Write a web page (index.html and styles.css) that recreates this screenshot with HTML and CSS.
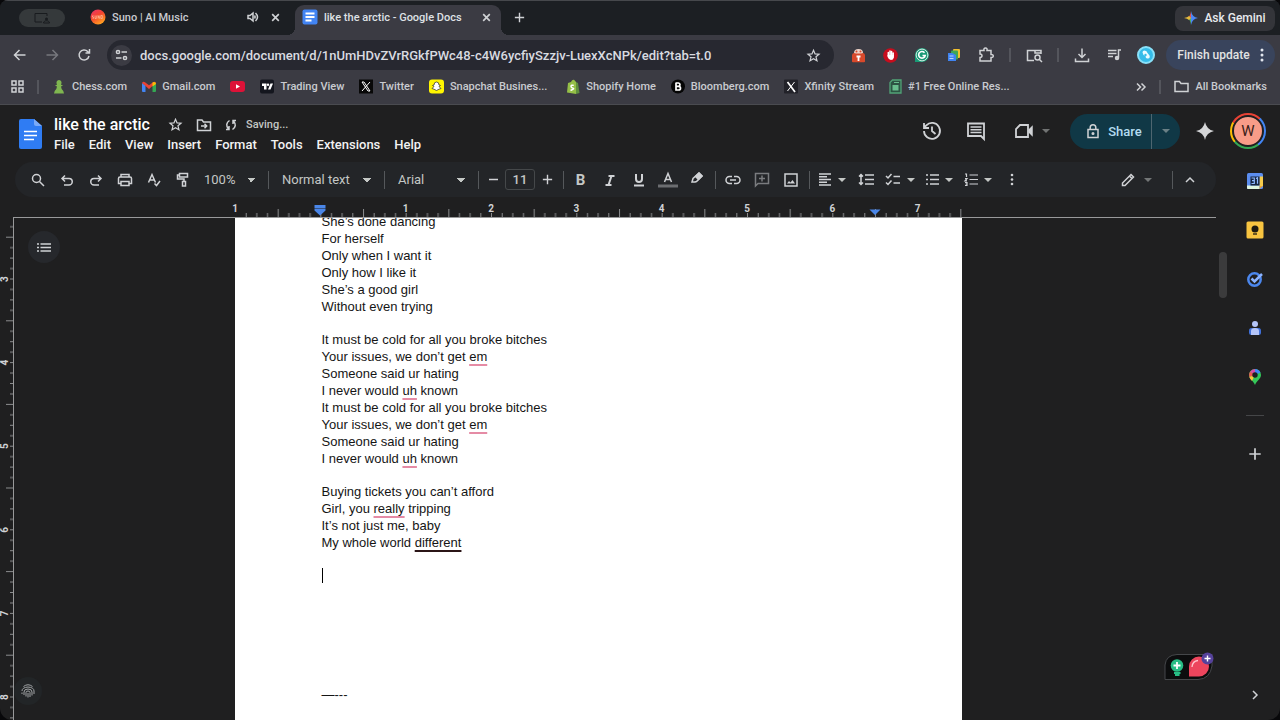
FILE: index.html
```html
<!DOCTYPE html>
<html lang="en">
<head>
    <meta charset="UTF-8">
    <meta name="viewport" content="width=device-width, initial-scale=1.0">
    <title>like the arctic - Google Docs</title>
    <link rel="stylesheet" href="styles.css">
</head>
<body>
    <!-- Shared icons -->
    <svg class="sprite" aria-hidden="true">
        <symbol id="i-close" viewBox="0 0 10 10"><path d="M2 2l6 6M8 2L2 8"/></symbol>
        <symbol id="i-plus" viewBox="0 0 14 14"><path d="M7 2v10M2 7h10"/></symbol>
        <symbol id="i-star" viewBox="0 0 24 24"><path d="M12 3.6l2.5 5.8 6.3.6-4.8 4.1 1.5 6.2-5.5-3.3-5.5 3.3L8 14.100l-4.800-4.100 6.300-.6z"/></symbol>
        <symbol id="i-docs" viewBox="0 0 23 30"><path fill="#2f7cf3" d="M2 0h13l8 7v21a2 2 0 0 1-2 2H2a2 2 0 0 1-2-2V2a2 2 0 0 1 2-2z"/><path fill="#7aaaf8" d="M15 0l8 7h-6a2 2 0 0 1-2-2z"/><path stroke="#fff" stroke-width="1.600" d="M5 12.500h13M5 16.500h13M5 20.500h10"/></symbol>
    </svg>

    <!-- Browser chrome -->
    <div class="tab-strip">
        <button class="profile-pill" aria-label="Shared screen"><svg width="18" height="12" viewBox="0 0 18 12"><path d="M9 10H2V1.500h12V4" /><circle cx="13.500" cy="7" r="1.500" fill="#181b1e"/><path d="M10.500 11c0-3 6-3 6 0z" fill="#181b1e"/></svg></button>
        <div class="tab">
            <svg width="16" height="16" viewBox="0 0 16 16"><defs><linearGradient id="suno" x2="0.600" y2="1"><stop offset="0" stop-color="#e8336f"/><stop offset="0.500" stop-color="#f4452f"/><stop offset="1" stop-color="#ffa021"/></linearGradient></defs><circle cx="8" cy="8" r="7.500" fill="url(#suno)"/><path d="M3.500 6.800h-1v1.300h1v1.300h-1M5 6.500v3h1.300v-3M8 9.500v-3l1.300 3v-3M10.800 6.500h1.500v3h-1.500z" stroke="#ffc0a0" stroke-width=".7" fill="none"/></svg>
            <span class="tab-title">Suno | AI Music</span>
            <button aria-label="Mute tab"><svg class="line" width="12" height="12" viewBox="0 0 12 12"><path d="M1 4.500h2l3-2.500v8L3 7.500H1z"/><path d="M7.500 4.500q1.200 1.500 0 3M8.500 2q4 4 0 8"/></svg></button>
            <button aria-label="Close tab"><svg class="line" width="11" height="11"><use href="#i-close"/></svg></button>
        </div>
        <div class="tab active">
            <svg width="16" height="16" viewBox="0 0 16 16"><rect x=".5" y=".5" width="15" height="15" rx="2" fill="#4284f3"/><path d="M3.500 4.500h9M3.500 8h9M3.500 11.500h6" stroke="#fff" stroke-width="1.800"/></svg>
            <span class="tab-title">like the arctic - Google Docs</span>
            <button aria-label="Close tab"><svg class="line" width="11" height="11"><use href="#i-close"/></svg></button>
        </div>
        <button class="new-tab" aria-label="New tab"><svg class="line" width="13" height="13"><use href="#i-plus"/></svg></button>
        <button class="gemini"><svg width="14" height="14" viewBox="0 0 14 14"><path fill="#4b87f5" d="M7 0q1 6 7 7-6 1-7 7z"/><path fill="#e6514c" d="M7 0v7H3.500Q6.500 5 7 0z"/><path fill="#4fae62" d="M7 14V7H3.500Q6.500 9 7 14z"/><path fill="#e3ba3d" d="M0 7q3.500-.6 5-2l2 2-2 2Q3.500 7.600 0 7z"/></svg>Ask Gemini</button>
    </div>

    <div class="browser-bar">
        <button class="nav-btn" aria-label="Back"><svg class="line" width="14" height="14" viewBox="0 0 14 14"><path d="M12.500 7H2M6.500 2L1.500 7l5 5"/></svg></button>
        <button class="nav-btn dim" aria-label="Forward"><svg class="line" width="14" height="14" viewBox="0 0 14 14"><path d="M1.500 7H12M7.500 2l5 5-5 5"/></svg></button>
        <button class="nav-btn" aria-label="Reload"><svg class="line" width="14" height="14" viewBox="0 0 14 14"><path d="M12 8a5 5 0 1 1-1.300-4.500L12.500 5M12.500 1v4h-4"/></svg></button>
        <div class="address">
            <button class="site-info" aria-label="Site information"><svg class="line" width="13" height="12" viewBox="0 0 13 12"><circle cx="3" cy="3" r="1.600"/><path d="M6.500 3H12M1 9h5.500"/><circle cx="10" cy="9" r="1.600"/></svg></button>
            <input type="text" aria-label="Address" value="docs.google.com/document/d/1nUmHDvZVrRGkfPWc48-c4W6ycfiySzzjv-LuexXcNPk/edit?tab=t.0">
            <button aria-label="Bookmark this tab"><svg class="line wide" width="15" height="15"><use href="#i-star"/></svg></button>
        </div>
        <div class="extensions">
            <button class="nav-btn" aria-label="Password extension"><svg width="15" height="15" viewBox="0 0 15 15"><path fill="#d8492b" d="M1 7q.5-2 2-2h9q1.500 0 2 2v6.500q0 .8-1 .8H2q-1 0-1-.8z"/><path fill="#eed3c8" d="M3 5q0-4 4.500-4T12 5l-2 .5H5z"/><circle cx="5.500" cy="3.500" r="1" fill="#d8492b"/><circle cx="9.500" cy="3.500" r="1" fill="#d8492b"/><path stroke="#fff" stroke-width="1.800" d="M7.500 8v5M5.500 8.500h4"/></svg></button>
            <button class="nav-btn" aria-label="AdBlock"><svg width="15" height="15" viewBox="0 0 15 15"><circle cx="7.500" cy="7.500" r="7.300" fill="#c70d1d"/><path fill="none" stroke="#fff" stroke-width="1.500" stroke-linecap="round" d="M5.300 8V4.500M7 7V3M8.600 7V3.500M10.200 8V5"/><path fill="#fff" d="M4.600 7h6.300v2.500q-.5 2.500-3 2.500-2 0-3.300-3z"/></svg></button>
            <button class="nav-btn" aria-label="Grammarly"><svg width="16" height="16" viewBox="0 0 16 16"><path fill="#189a76" d="M1 15V8a7 7 0 1 1 7 7z"/><circle cx="8" cy="8" r="5.900" fill="none" stroke="#d6efe7"/><path fill="none" stroke="#fff" stroke-width="1.600" d="M10.500 5.700A3.300 3.300 0 1 0 11.200 8.500H8.500"/></svg></button>
            <button class="nav-btn" aria-label="Copy extension"><svg width="14" height="14" viewBox="0 0 14 14"><rect x="6" y="1" width="7" height="9" rx="1" fill="#f2c02e"/><rect x="4" y="2.500" width="7" height="9" rx="1" fill="#3fa657"/><path d="M1 5h4.500L9 7v6H1z" fill="#3f83f0"/><path d="M2.500 8h4M2.500 10.500h4" stroke="#bcd4fb"/></svg></button>
            <button class="nav-btn" aria-label="Extensions"><svg class="line" width="16" height="16" viewBox="0 0 16 16"><path d="M2 3.500h4Q5.500 1 7.500 1T9 3.500h4v4q2.300-.2 2.300 1.500T13 10.500V14H2v-3.500q2 0 2-1.700T2 7z"/></svg></button>
            <i class="bar-sep"></i>
            <button class="nav-btn" aria-label="Search tabs"><svg class="line" width="17" height="15" viewBox="0 0 17 15"><path d="M8 12.500H1.500v-10h13.500V6M9 2.500v2.500h6"/><circle cx="11.500" cy="9.500" r="2.500"/><path d="M13.500 11.500l2.500 2.500"/></svg></button>
            <i class="bar-sep"></i>
            <button class="nav-btn" aria-label="Downloads"><svg class="line" width="16" height="16" viewBox="0 0 16 16"><path d="M8 1.500V10M4.500 7L8 10.500 11.500 7M1.500 11.500v3h13v-3"/></svg></button>
            <button class="nav-btn" aria-label="Media"><svg class="line" width="15" height="14" viewBox="0 0 15 14"><path d="M1 2.500h8.500M1 5.500h8.500M1 8.500h5M11.500 9.500V2H14"/><circle cx="10" cy="10" r="1.500" fill="#c9cbd0"/></svg></button>
            <button class="nav-btn" aria-label="Profile"><svg width="18" height="18" viewBox="0 0 18 18"><circle cx="9" cy="9" r="8" fill="#35bce9" stroke="#8ae0f8" stroke-width="2"/><path d="M5.500 6.500q0-2 2-2 2.500 0 3 2.500l2 2.500q1 2.500-1.500 3t-2.500-2.500l-2-1z" fill="#e9fbff"/><circle cx="8.500" cy="9" r="1.200" fill="#35bce9"/></svg></button>
        </div>
        <button class="update-btn">Finish update<svg width="4" height="14" viewBox="0 0 4 14" fill="#e3e7ef"><circle cx="2" cy="2" r="1.500"/><circle cx="2" cy="7" r="1.500"/><circle cx="2" cy="12" r="1.500"/></svg></button>
    </div>

    <nav class="bookmarks">
        <button aria-label="Apps"><svg class="line" width="13" height="13" viewBox="0 0 13 13"><path d="M1 1h4v4H1zM8 1h4v4H8zM1 8h4v4H1zM8 8h4v4H8z"/></svg></button>
        <i class="bar-sep"></i>
        <a href="#"><svg width="14" height="15" viewBox="0 0 14 15"><path fill="#7fb650" d="M7 1a2.700 2.700 0 0 1 1.800 4.600L11 6.500l-2 1q.3 3 2.300 4.500l.7 2.500H2l.7-2.500Q4.700 10.500 5 7.500l-2-1 2.200-.9A2.700 2.700 0 0 1 7 1z"/></svg>Chess.com</a>
        <a href="#"><svg width="14" height="15" viewBox="0 0 14 15"><path fill="#4285f4" d="M0 4l3.500 2.500V13H1q-1 0-1-1z"/><path fill="#34a853" d="M14 4l-3.500 2.500V13H13q1 0 1-1z"/><path fill="#ea4335" d="M0 4q1-2 3-.8l4 3 4-3q2-1.200 3 .8L7 10z"/><path fill="#fbbc04" d="M10.500 3.500L12 3q2 0 2 2l-3.500 2.500z"/></svg>Gmail.com</a>
        <a href="#" aria-label="YouTube"><svg width="15" height="15" viewBox="0 0 15 15"><rect y="2" width="15" height="11" rx="3" fill="#dd1238"/><path fill="#fff" d="M6 5.200v4.600l4-2.300z"/></svg></a>
        <a href="#"><svg width="14" height="15" viewBox="0 0 14 15"><rect y=".5" width="14" height="14" rx="2" fill="#14161e"/><path fill="#fff" d="M2 4.500h4.500v6h-2.500V7H2zM10.500 4.500H13l-2.500 6H8z"/><circle cx="8" cy="5.700" r="1.200" fill="#fff"/></svg>Trading View</a>
        <a href="#"><svg width="14" height="15" viewBox="0 0 14 15"><rect y=".5" width="14" height="14" fill="#080808"/><path fill="none" stroke="#fff" d="M3 3h2l6 9H9zM11 3L3 12"/></svg>Twitter</a>
        <a href="#" class="long"><svg width="15" height="15" viewBox="0 0 15 15"><rect y=".5" width="15" height="14" rx="3" fill="#fff500"/><path fill="#fff" stroke="#222" stroke-width=".7" d="M7.500 3Q10 3 10 6l1.500.5-1.500 1 2 2-2 .7-2.500 1.300L5 10.200 3 9.500l2-2-1.500-1L5 6q0-3 2.500-3z"/></svg>Snapchat Busines...</a>
        <a href="#"><svg width="14" height="15" viewBox="0 0 14 15"><path fill="#95bf47" d="M2 4l3-1q1-2.500 3-2.200L10 3v12l-9-1.500z"/><path fill="#5e8e3e" d="M10 3l2 1 1.500 10-3.500 1z"/><path fill="none" stroke="#fff" stroke-width="1.500" d="M7.800 6.400Q5 5.600 5 7.300T7 9.300 4.500 11.500"/></svg>Shopify Home</a>
        <a href="#"><svg width="14" height="15" viewBox="0 0 14 15"><circle cx="7" cy="7.500" r="7" fill="#050505"/><path fill="none" stroke="#fff" stroke-width="1.700" d="M5 4v7h2.500q2 0 2-1.800T7.500 7.300H5M7.300 7.300Q9 7.200 9 5.700T7.300 4H4.500"/></svg>Bloomberg.com</a>
        <a href="#"><svg width="14" height="15" viewBox="0 0 14 15"><rect y=".5" width="14" height="14" rx="1" fill="#222229"/><path stroke="#fff" stroke-width="1.700" d="M3.500 3L11 13"/><path stroke="#fff" d="M10.500 3L3.500 12"/></svg>Xfinity Stream</a>
        <a href="#"><svg width="13" height="15" viewBox="0 0 13 15"><path fill="#2d5343" stroke="#51a477" stroke-width="1.300" d="M3.500 1H12v13H1V3.500z"/><path stroke="#69bd8d" d="M5 3.500h5"/><rect x="3.500" y="6" width="6" height="5.500" fill="#69bd8d"/></svg>#1 Free Online Res...</a>
        <button class="overflow" aria-label="More bookmarks"><svg class="line" width="10" height="10" viewBox="0 0 10 10"><path d="M1 1.500L4.500 5 1 8.500M5.500 1.500L9 5 5.500 8.500"/></svg></button>
        <i class="bar-sep"></i>
        <a href="#"><svg class="line" width="15" height="13" viewBox="0 0 15 13"><path d="M1 11.500v-10h4.500L7 3.500h7v8z"/></svg>All Bookmarks</a>
    </nav>

    <!-- Docs header -->
    <header class="docs-header">
        <a href="#" class="logo" aria-label="Docs home"><svg width="23" height="30"><use href="#i-docs"/></svg></a>
        <div class="heading">
            <div class="title-row">
                <input class="doc-title" type="text" aria-label="Document title" value="like the arctic">
                <button aria-label="Star"><svg class="line wide" width="15" height="15"><use href="#i-star"/></svg></button>
                <button aria-label="Move"><svg class="line" width="16" height="14" viewBox="0 0 16 14"><path d="M1.500 12.500V2H6l1.500 2h7v8.500zM5 8h5M8.500 5.800L10.700 8l-2.200 2.200"/></svg></button>
                <span class="status"><svg class="line" width="12" height="12" viewBox="0 0 12 12"><path d="M4.500 1.500Q-.5 5 3.500 10M4 7v3.500H1M7.500 10.500q5-3.500 1-8.500M8 5V1.500h3"/></svg>Saving...</span>
            </div>
            <nav class="menu">
                <button>File</button><button>Edit</button><button>View</button><button>Insert</button><button>Format</button><button>Tools</button><button>Extensions</button><button>Help</button>
            </nav>
        </div>
        <div class="header-actions">
            <button class="round" aria-label="Version history"><svg class="line" width="20" height="20" viewBox="0 0 20 20"><path d="M2 10a8 8 0 1 0 2.300-5.700L2 6.600M2 2v5h5M10 5.500V10l3.500 3" stroke-width="1.800"/></svg></button>
            <button class="round" aria-label="Comments"><svg class="line" width="20" height="20" viewBox="0 0 20 20"><path d="M2 2.500h16v15.500l-3-3H2z" stroke-width="1.800"/><path d="M4.500 6h11M4.500 8.800h11M4.500 11.600h11"/></svg></button>
            <button class="meet" aria-label="Join a call"><svg class="line" width="20" height="18" viewBox="0 0 20 18"><path d="M6 3h8v12H2V7z" stroke-width="1.800"/><path fill="#d0d2d5" d="M15 8l3-3v8l-3-3z"/></svg><i class="caret"></i></button>
            <div class="share">
                <button><svg class="line" width="14" height="16" viewBox="0 0 14 16"><path d="M2 6.500h10v8H2zM4.200 6.500v-2a2.800 2.800 0 0 1 5.600 0v2"/><circle cx="7" cy="10.500" r=".8"/></svg>Share</button>
                <button class="share-more" aria-label="Share options"><i class="caret"></i></button>
            </div>
            <button class="spark" aria-label="Ask Gemini"><svg width="20" height="20" viewBox="0 0 20 20"><path fill="#d5d6d8" d="M10 1q1.500 7.500 9 9-7.500 1.500-9 9-1.500-7.500-9-9 7.500-1.500 9-9z"/></svg></button>
            <button class="avatar" aria-label="Account"><span>W</span></button>
        </div>
    </header>

    <div class="docs-body">
        <div class="editor">
            <div class="toolbar">
                <button aria-label="Search menus"><svg class="line" width="14" height="14" viewBox="0 0 14 14"><circle cx="5.500" cy="5.500" r="4"/><path d="M8.500 8.500L13 13"/></svg></button>
                <button aria-label="Undo"><svg class="line" width="14" height="14" viewBox="0 0 14 14"><path d="M5 2.500L2 5.500l3 3M2.500 5.500H9a3 3 0 0 1 0 6.500H4"/></svg></button>
                <button aria-label="Redo"><svg class="line" width="14" height="14" viewBox="0 0 14 14"><path d="M9 2.500l3 3-3 3M11.500 5.500H5A3 3 0 0 0 5 12h5"/></svg></button>
                <button aria-label="Print"><svg class="line" width="16" height="14" viewBox="0 0 16 14"><path d="M4 4V1.500h8V4M4 10.500H1.500V5.500q0-1.500 1.500-1.500h10q1.500 0 1.500 1.500v5H12M4 8.500h8v4H4z"/></svg></button>
                <button aria-label="Spelling"><svg class="line" width="14" height="14" viewBox="0 0 14 14"><path d="M1.500 9.500l3.500-8 3.500 8M2.700 7h4.600M7.500 10.500l2 2L13 8"/></svg></button>
                <button aria-label="Paint format"><svg class="line" width="14" height="15" viewBox="0 0 14 15"><path d="M3.500 1.500h8v3.500h-8zM3.500 3H1.500v4H8v2.500M6.500 9.500h3v4.500h-3z"/></svg></button>
                <select class="zoom" aria-label="Zoom"><option>100%</option></select>
                <i class="sep"></i>
                <select class="para" aria-label="Styles"><option>Normal text</option></select>
                <i class="sep"></i>
                <select class="font" aria-label="Font"><option>Arial</option></select>
                <i class="sep"></i>
                <button class="step" aria-label="Decrease font size"><svg class="line" width="13" height="13" viewBox="0 0 13 13"><path d="M2 6.500h9"/></svg></button>
                <input class="size" type="text" aria-label="Font size" value="11">
                <button class="step" aria-label="Increase font size"><svg class="line" width="13" height="13"><use href="#i-plus"/></svg></button>
                <i class="sep"></i>
                <button class="bold">B</button>
                <button aria-label="Italic"><svg class="line thick" width="12" height="12" viewBox="0 0 12 12"><path d="M4.500 2h6M1.500 11h6M7.500 2L4.500 11"/></svg></button>
                <button aria-label="Underline"><svg class="line thick" width="12" height="14" viewBox="0 0 12 14"><path d="M3 1v5a3 3 0 0 0 6 0V1M1 12.500h10"/></svg></button>
                <button aria-label="Text color"><svg class="line" width="20" height="16" viewBox="0 0 20 16"><path d="M6.500 10L10 1.500 13.500 10M7.500 7.500h5"/><path stroke="#6b6d70" stroke-width="3" d="M0 14h20"/></svg></button>
                <button aria-label="Highlight color"><svg class="line" width="14" height="16" viewBox="0 0 14 16"><path d="M2 10l1-3.500L9 1l3 3-5.500 5.500L5 10z"/><path fill="#d0d2d5" d="M5.500 4.500L8.500 7.500 12 4 9 1z"/></svg></button>
                <i class="sep"></i>
                <button aria-label="Insert link"><svg class="line" width="16" height="14" viewBox="0 0 16 14"><path d="M7 3.500H4.500a3.500 3.500 0 0 0 0 7H7M9 3.500h2.500a3.500 3.500 0 0 1 0 7H9M5 7h6"/></svg></button>
                <button class="faded" aria-label="Add comment"><svg class="line" width="16" height="15" viewBox="0 0 16 15"><path d="M1.500 14V1.500h13v10H4zM8 3.500v6M5 6.500h6"/></svg></button>
                <button aria-label="Insert image"><svg class="line" width="14" height="14" viewBox="0 0 14 14"><path d="M1 1h12v12H1z"/><path fill="#d0d2d5" stroke="none" d="M3 10.500l2-2.500 1.500 1.500L8.500 7l2.500 3.500z"/></svg></button>
                <i class="sep"></i>
                <button class="drop" aria-label="Align"><svg class="line" width="14" height="13" viewBox="0 0 14 13"><path d="M1 1h12M1 3.800h8M1 6.500h12M1 9.300h8M1 12h12"/></svg><i class="caret"></i></button>
                <button aria-label="Line spacing"><svg class="line" width="16" height="13" viewBox="0 0 16 13"><path d="M7 2h9M7 6.500h9M7 11h9M3 1v11M1 3.500l2-2 2 2M1 9.500l2 2 2-2"/></svg></button>
                <button class="drop" aria-label="Checklist"><svg class="line" width="16" height="13" viewBox="0 0 16 13"><path d="M8.500 3.500H15M8.500 10H15M1 3l2 2 3.500-4M1 9.500l2 2 3.500-4"/></svg><i class="caret"></i></button>
                <button class="drop" aria-label="Bulleted list"><svg class="line" width="14" height="13" viewBox="0 0 14 13"><path d="M5 2h9M5 6.500h9M5 11h9M1 2h2M1 6.500h2M1 11h2"/></svg><i class="caret"></i></button>
                <button class="drop" aria-label="Numbered list"><svg class="line" width="14" height="13" viewBox="0 0 14 13"><path d="M5.500 2H14M5.500 6.500H14M5.500 11H14M1 1h1.500v3M1 5.500h2l-2 2.300h2M1 9.500h2v3H1M1.500 11H3" stroke-width="1.200"/></svg><i class="caret"></i></button>
                <button class="more" aria-label="More"><svg width="4" height="13" viewBox="0 0 4 13" fill="#d0d2d5"><circle cx="2" cy="2" r="1.300"/><circle cx="2" cy="6.500" r="1.300"/><circle cx="2" cy="11" r="1.300"/></svg></button>
                <button class="drop mode" aria-label="Editing mode"><svg class="line" width="14" height="14" viewBox="0 0 14 14"><path d="M1.500 12.500V10l8.500-8.500L12.500 4 4 12.500zM8.500 3L11 5.500"/></svg><i class="caret"></i></button>
                <i class="sep"></i>
                <button aria-label="Hide menus"><svg class="line" width="10" height="10" viewBox="0 0 10 10"><path d="M1 7l4-4 4 4"/></svg></button>
            </div>

            <div class="ruler">
                <svg width="727" height="20" viewBox="0 0 727 20">
                    <defs>
                        <pattern id="inch" width="85.330" height="20" patternUnits="userSpaceOnUse">
                            <path stroke="#8b8c8e" d="M.5 16v4M11.200 16v4M21.800 16v4M32.500 16v4M43.200 12v8M53.800 16v4M64.500 16v4M75.200 16v4"/>
                        </pattern>
                    </defs>
                    <rect x="1" width="726" height="20" fill="url(#inch)"/>
                    <g class="ruler-num">
                        <text x="0" y="15">1</text><text x="170.600" y="15">1</text><text x="256" y="15">2</text><text x="341.300" y="15">3</text><text x="426.600" y="15">4</text><text x="512" y="15">5</text><text x="597.300" y="15">6</text><text x="682.600" y="15">7</text>
                    </g>
                    <path fill="#4a86e8" d="M79.500 8h11v3.500h-11zM79.500 12h11v1.500l-5.500 5-5.500-5zM634.500 12.500h11l-5.500 5.500z"/>
                </svg>
            </div>

            <div class="workspace">
                <svg class="side-ruler" width="14" height="504" viewBox="0 0 14 504">
                    <defs>
                        <pattern id="inch-v" y="61.500" width="14" height="83.600" patternUnits="userSpaceOnUse">
                            <path stroke="#8b8c8e" d="M10 .5h4M10 11h4M10 21.400h4M10 31.900h4M6 42.300h8M10 52.800h4M10 63.200h4M10 73.700h4"/>
                        </pattern>
                    </defs>
                    <rect width="14" height="504" fill="url(#inch-v)"/>
                    <g class="ruler-num">
                        <text transform="translate(8 62) rotate(-90)">3</text><text transform="translate(8 145.600) rotate(-90)">4</text><text transform="translate(8 229.200) rotate(-90)">5</text><text transform="translate(8 312.800) rotate(-90)">6</text><text transform="translate(8 396.400) rotate(-90)">7</text><text transform="translate(8 480) rotate(-90)">8</text>
                    </g>
                </svg>
                <div class="canvas">
                    <button class="outline-btn" aria-label="Show outline"><svg class="line" width="14" height="9" viewBox="0 0 14 9"><path d="M3.500 1H14M3.500 4.500H14M3.500 8H14M0 1h2M0 4.500h2M0 8h2"/></svg></button>
                    <button class="print-btn" aria-label="Fingerprint"><svg class="line" width="14" height="14" viewBox="0 0 14 14"><path stroke-width="1" d="M2.500 2.500q4.500-3.500 9 0M1 7q0-3.500 6-4 6 .5 6 4v3M3 11V8q0-3 4-3t4 3v3.500M5 12.500V8.500Q5 7 7 7t2 1.500V13M7 9v4.500M1 8.500V10"/></svg></button>
                    <article class="page">
                        <p>She’s done dancing</p>
                        <p>For herself</p>
                        <p>Only when I want it</p>
                        <p>Only how I like it</p>
                        <p>She’s a good girl</p>
                        <p>Without even trying</p>
                        <p class="blank"></p>
                        <p>It must be cold for all you broke bitches</p>
                        <p>Your issues, we don’t get <u>em</u></p>
                        <p>Someone said ur hating</p>
                        <p>I never would <u>uh</u> known</p>
                        <p>It must be cold for all you broke bitches</p>
                        <p>Your issues, we don’t get <u>em</u></p>
                        <p>Someone said ur hating</p>
                        <p>I never would <u>uh</u> known</p>
                        <p class="blank"></p>
                        <p>Buying tickets you can’t afford</p>
                        <p>Girl, you <u>really</u> tripping</p>
                        <p>It’s not just me, baby</p>
                        <p>My whole world <u class="dark">different</u></p>
                        <p></p>
                        <p><span class="cursor"></span></p>
                        <p></p>
                        <p></p>
                        <p></p>
                        <p></p>
                        <p></p>
                        <p class="blank"></p>
                        <p>—---</p>
                    </article>
                </div>
            </div>
        </div>

        <aside class="side-panel">
            <div class="scroll-thumb"></div>
            <div class="apps">
                <button aria-label="Calendar"><svg width="18" height="18" viewBox="0 0 18 18"><rect x="1" y="1" width="16" height="16" rx="1.500" fill="#5b8def"/><path fill="#f6cb4b" d="M13.500 4.500H17V14h-3.500z"/><path fill="#dff5df" d="M1 13.500h12.500V17H2q-1 0-1-1z"/><path fill="#e8a33d" d="M13.500 14H17l-3.500 3z"/><rect x="4.500" y="4.500" width="9" height="9" fill="#16243f"/><path fill="none" stroke="#8db8ff" stroke-width="1.200" d="M5.500 6h2.800v5.500H5.500M6 8.700h2M10 6.500l1.500-.7v6"/></svg></button>
                <button aria-label="Keep"><svg width="18" height="18" viewBox="0 0 18 18"><rect x=".5" y=".5" width="17" height="17" rx="1.500" fill="#f8c440"/><circle cx="9" cy="8" r="3.500" fill="#1e1a10"/><path stroke="#1e1a10" stroke-width="1.300" d="M7 13h4"/></svg></button>
                <button aria-label="Tasks"><svg width="18" height="18" viewBox="0 0 18 18" fill="none"><circle cx="8.500" cy="9.500" r="6.200" stroke="#4b87ee" stroke-width="2.500"/><path stroke="#8ab2ff" stroke-width="2.500" d="M5.500 8.500l3 3L16 4"/></svg></button>
                <button aria-label="Contacts"><svg width="16" height="18" viewBox="0 0 16 18"><circle cx="8" cy="5" r="3" fill="#b4c4f8"/><rect x="2" y="9" width="12" height="7" rx="2.500" fill="#3f6fd8"/><path fill="#b4c4f8" d="M4 16v-4q0-3 4-3t4 3v4z"/></svg></button>
                <button aria-label="Maps"><svg width="14" height="18" viewBox="0 0 14 18"><path fill="#34c759" d="M7 1a6 6 0 0 1 6 6c0 4-4 5-6 10C5 12 1 11 1 7a6 6 0 0 1 6-6z"/><path fill="#4285f4" d="M7 7V1a6 6 0 0 1 5.500 3.500z"/><path fill="#d64ba8" d="M7 7V1a6 6 0 0 0-5 2.800z"/><path fill="#ef5350" d="M7 7L2 3.800Q.5 6 1.300 9z"/><path fill="#f8c63b" d="M7 7l-5.700 2Q2 11 4 13z"/><circle cx="7" cy="7" r="2.700" fill="#1f1f20"/></svg></button>
                <hr>
                <button class="add" aria-label="Get add-ons"><svg class="line" width="16" height="16"><use href="#i-plus"/></svg></button>
                <button class="collapse" aria-label="Hide side panel"><svg class="line" width="10" height="10" viewBox="0 0 10 10"><path d="M3 1l4 4-4 4"/></svg></button>
            </div>
        </aside>
    </div>

    <button class="writing-widget" aria-label="Writing suggestions">
        <svg width="50" height="32" viewBox="0 0 50 32"><path fill="#0c0d0e" stroke="#45474a" d="M1 31.500V17Q2 7 13 6.500h35V18Q46 31 34 31.500z"/><circle cx="13" cy="17.500" r="6.300" fill="#27bd85"/><path stroke="#27bd85" stroke-width="1.800" d="M10 25h6.500M11 27h4.500"/><path stroke="#fff" stroke-width="1.800" d="M13 14v7M9.500 17.500h7"/><path fill="#ed455d" d="M25 28.500V18.500a10 10 0 1 1 10 10z"/><path fill="none" stroke="#ffc4cc" stroke-width="1.300" d="M28 19q.5-6 6-6.500"/><circle cx="43.500" cy="10.500" r="6" fill="#55419b"/><path stroke="#fff" stroke-width="1.400" d="M43.500 7.500v6M40.500 10.500h6"/></svg>
    </button>
</body>
</html>
```
FILE: styles.css
```css
* {
    box-sizing: border-box;
}

html {
    background: #08080a;
}

body {
    margin: 0;
    height: 100vh;
    overflow: hidden;
    display: flex;
    flex-direction: column;
    background: #1f1f20;
    border-radius: 8px 8px 12px 12px;
    font-family: Roboto, "Liberation Sans", sans-serif;
    color: #e3e3e3;
}

button,
input,
select {
    font: inherit;
    color: inherit;
    background: none;
    border: none;
    padding: 0;
    margin: 0;
    outline: none;
}

button {
    display: flex;
    align-items: center;
    justify-content: center;
    flex-shrink: 0;
}

a {
    color: inherit;
    text-decoration: none;
}

svg {
    flex-shrink: 0;
    overflow: visible;
}

.sprite {
    position: absolute;
    width: 0;
    height: 0;
}

.line {
    fill: none;
    stroke: #d0d2d5;
    stroke-width: 1.5;
}

.line.wide,
.line.thick {
    stroke-width: 2;
}

.caret {
    border: 4px solid transparent;
    border-top-color: #c4c7c5;
    border-bottom: 0;
}

/* Tab strip */
.tab-strip {
    display: flex;
    align-items: center;
    height: 35px;
    flex-shrink: 0;
    padding: 0 5px 0 19px;
    background: #1c1f23;
    border-top: 1px solid #46484c;
    font-size: 11px;
    font-weight: 500;
}

.profile-pill {
    width: 46px;
    height: 18px;
    border-radius: 9px;
    background: #35393b;
}

.profile-pill path {
    fill: none;
    stroke: #181b1e;
}

.tab {
    display: flex;
    align-items: center;
    gap: 6px;
    width: 205px;
    padding: 0 12px 2px 0;
    margin-left: 25px;
    color: #c9cbd0;
}

.tab-title {
    flex: 1;
    white-space: nowrap;
}

.tab button {
    width: 16px;
    height: 16px;
}

.tab.active {
    position: relative;
    width: 206px;
    height: 30px;
    align-self: flex-end;
    margin-left: 0;
    padding: 0 7px 6px;
    background: #3b3b43;
    border-radius: 9px 9px 0 0;
    color: #dfe1e5;
}

.tab.active::before,
.tab.active::after {
    content: "";
    position: absolute;
    bottom: 0;
    width: 8px;
    height: 8px;
}

.tab.active::before {
    left: -8px;
    background: radial-gradient(circle at 0 0, transparent 8px, #3b3b43 8px);
}

.tab.active::after {
    right: -8px;
    background: radial-gradient(circle at 100% 0, transparent 8px, #3b3b43 8px);
}

.new-tab {
    width: 36px;
    height: 28px;
    padding-bottom: 2px;
}

.gemini {
    margin-left: auto;
    gap: 6px;
    width: 100px;
    height: 25px;
    border-radius: 8px;
    background: #34353a;
    color: #e8eaed;
    font-size: 12px;
}

/* Address row */
.browser-bar {
    display: flex;
    align-items: center;
    height: 40px;
    flex-shrink: 0;
    padding: 0 5px 0 4px;
    background: #3b3b43;
}

.nav-btn {
    width: 32px;
    height: 30px;
}

.dim {
    opacity: 0.4;
}

.address {
    flex: 1;
    display: flex;
    align-items: center;
    gap: 8px;
    height: 30px;
    margin: 0 8px 0 7px;
    padding: 0 13px 0 4px;
    border-radius: 15px;
    background: #272830;
}

.address input {
    flex: 1;
    min-width: 0;
    font-size: 13px;
    font-weight: 500;
    color: #d9dbe0;
}

.site-info {
    width: 21px;
    height: 21px;
    border-radius: 11px;
    background: #3b3b43;
}

.extensions {
    display: flex;
    align-items: center;
}

.bar-sep {
    width: 2px;
    height: 14px;
    margin: 0 7px;
    background: #54555c;
}

.update-btn {
    gap: 10px;
    width: 109px;
    height: 30px;
    margin-left: 4px;
    border-radius: 15px;
    background: #39445c;
    font-size: 12px;
    font-weight: 500;
}

/* Bookmarks */
.bookmarks {
    display: flex;
    align-items: center;
    gap: 15px;
    height: 30px;
    flex-shrink: 0;
    padding: 0 13px 6px 11px;
    background: #3b3b43;
    border-bottom: 1px solid #4a4b50;
    font-size: 11px;
    font-weight: 500;
    color: #c9cbd0;
    white-space: nowrap;
}

.bookmarks a {
    display: flex;
    align-items: center;
    gap: 6px;
}

.bookmarks .bar-sep {
    margin: 0 -2px;
}

.bookmarks .long {
    margin-right: 4px;
}

.overflow {
    margin-left: auto;
}

/* Docs header */
.docs-header {
    display: flex;
    align-items: center;
    height: 57px;
    flex-shrink: 0;
    padding: 0 14px 0 19px;
}

.logo {
    display: flex;
    margin-right: 12px;
}

.heading {
    flex: 1;
    padding-top: 2px;
}

.title-row {
    display: flex;
    align-items: center;
    gap: 13px;
    height: 20px;
}

.doc-title {
    width: 101px;
    font-size: 16px;
    font-weight: 500;
    color: #fff;
}

.status {
    display: flex;
    align-items: center;
    gap: 9px;
    font-size: 11px;
    font-weight: 500;
    color: #c4c7c5;
}

.menu {
    display: flex;
    gap: 14px;
    height: 20px;
    font-size: 13px;
    font-weight: 500;
    color: #f2f2f2;
}

.header-actions {
    display: flex;
    align-items: center;
    padding-bottom: 5px;
}

.round {
    width: 44px;
    height: 36px;
}

.meet {
    gap: 8px;
    width: 50px;
    height: 36px;
    margin: 0 13px 0 9px;
}

.meet .caret,
.share-more .caret,
.mode .caret {
    opacity: 0.5;
}

.share {
    display: flex;
    height: 35px;
    border-radius: 18px;
    background: #103846;
    color: #b4dcf0;
    font-size: 13px;
    font-weight: 500;
}

.share button {
    gap: 8px;
    width: 81px;
    padding-left: 7px;
}

.share .share-more {
    width: 29px;
    padding: 0;
    border-left: 1px solid #4e6670;
}

.spark {
    width: 50px;
    height: 36px;
}

.avatar {
    width: 36px;
    height: 36px;
    border-radius: 50%;
    background: conic-gradient(#e94235 0 12%, #4285f4 12% 40%, #34a853 40% 64%, #fbbc04 64% 83%, #e94235 83%);
}

.avatar span {
    width: 32px;
    height: 32px;
    border: 2px solid #1f1f20;
    border-radius: 50%;
    background: #f99c88;
    color: #3c1e18;
    font-size: 15px;
    line-height: 28px;
}

/* Editor */
.docs-body {
    flex: 1;
    min-height: 0;
    display: flex;
}

.editor {
    flex: 1;
    min-width: 0;
    display: flex;
    flex-direction: column;
}

.toolbar {
    display: flex;
    align-items: center;
    height: 35px;
    flex-shrink: 0;
    margin-left: 15px;
    padding: 0 12px 0 8px;
    border-radius: 18px;
    background: #232528;
    font-size: 13px;
    color: #c4c7c5;
}

.toolbar button {
    width: 29px;
    height: 28px;
}

.toolbar .step {
    width: 24px;
}

.toolbar select {
    appearance: none;
    height: 28px;
    background: conic-gradient(from 315deg at 50% 100%, #c4c7c5 90deg, transparent 0) no-repeat right 9px center / 8px 4px;
}

.toolbar .zoom {
    width: 67px;
    padding-left: 7px;
}

.toolbar .para {
    width: 109px;
    padding-left: 11px;
}

.toolbar .font {
    width: 87px;
    padding-left: 11px;
}

.sep {
    width: 1px;
    height: 18px;
    margin: 0 2px 0 4px;
    background: #55585b;
}

.size {
    width: 30px;
    height: 21px;
    border: 1px solid #45484a;
    border-radius: 3px;
    text-align: center;
    font-weight: 500;
}

.bold {
    font-size: 15px;
    font-weight: 700;
}

.faded {
    opacity: 0.5;
}

.toolbar .drop {
    gap: 6px;
    width: 39px;
}

.toolbar .mode {
    gap: 9px;
    margin-left: auto;
    margin-right: 12px;
}

.ruler {
    display: flex;
    justify-content: center;
    height: 20px;
    flex-shrink: 0;
    padding: 0 33px 0 14px;
}

.ruler-num {
    fill: #d0d2d5;
    font-size: 10px;
    font-weight: 700;
    text-anchor: middle;
}

.workspace {
    flex: 1;
    min-height: 0;
    display: flex;
}

.canvas {
    position: relative;
    flex: 1;
    display: flex;
    justify-content: center;
    padding-right: 34px;
    border-top: 1px solid #98999a;
    border-left: 1px solid #98999a;
    margin-left: -1px;
}

.outline-btn,
.print-btn {
    position: absolute;
    left: 14px;
    top: 13px;
    width: 32px;
    height: 32px;
    border-radius: 50%;
    background: #26282c;
}

.print-btn {
    left: 0;
    top: auto;
    bottom: 15px;
    width: 28px;
    height: 28px;
    background: #222527;
}

.print-btn .line {
    stroke: #a0a3a5;
}

.page {
    width: 727px;
    padding: 0 87px;
    overflow: hidden;
    background: #fff;
    color: #151515;
    font-family: "Liberation Sans", Arial, sans-serif;
    font-size: 13px;
    line-height: 17px;
}

.page p {
    height: 17px;
    margin: 0;
}

.page p:first-child {
    margin-top: -5px;
}

.page p.blank {
    height: 16px;
}

.page u {
    text-decoration: underline 2px #e58ba5;
    text-underline-offset: 3px;
    text-decoration-skip-ink: none;
}

.page .dark {
    text-decoration-color: #2b1517;
}

.cursor {
    display: block;
    width: 1px;
    height: 15px;
    background: #000;
}

/* Right hand panel */
.side-panel {
    display: flex;
    width: 64px;
    padding-left: 3px;
}

.scroll-thumb {
    width: 8px;
    height: 46px;
    margin-top: 90px;
    border-radius: 4px;
    background: #3b3b3c;
}

.apps {
    flex: 1;
    display: flex;
    flex-direction: column;
    align-items: center;
    padding: 0 0 10px 3px;
}

.apps button {
    width: 36px;
    height: 49px;
    margin-top: -6px;
    margin-bottom: 6px;
}

.apps hr {
    width: 18px;
    margin: 8px 0 19px;
    border: 0;
    border-top: 1px solid #454648;
}

.apps .collapse {
    height: 30px;
    margin: auto 0 0;
}

.writing-widget {
    position: absolute;
    right: 66px;
    bottom: 40px;
}
```
